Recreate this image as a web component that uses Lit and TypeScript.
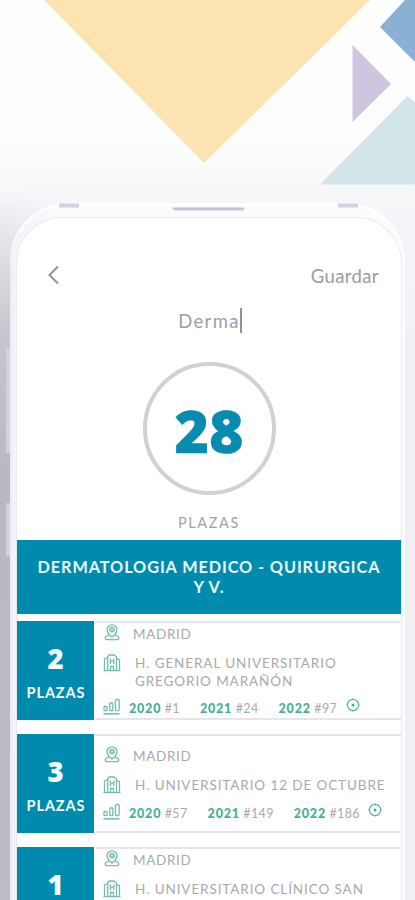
import { LitElement, html, css, svg } from "lit";
import { customElement, property } from "lit/decorators.js";

interface Rank { year: string; pos: string; }
interface Offer { seats: number; city: string; hospital: string[]; ranks: Rank[]; tall?: boolean; }

const offers: Offer[] = [
  { seats: 2, city: "MADRID", hospital: ["H. GENERAL UNIVERSITARIO", "GREGORIO MARAÑÓN"],
    ranks: [{ year: "2020", pos: "#1" }, { year: "2021", pos: "#24" }, { year: "2022", pos: "#97" }] },
  { seats: 3, city: "MADRID", hospital: ["H. UNIVERSITARIO 12 DE OCTUBRE"],
    ranks: [{ year: "2020", pos: "#57" }, { year: "2021", pos: "#149" }, { year: "2022", pos: "#186" }] },
  { seats: 1, city: "MADRID", hospital: ["H. UNIVERSITARIO CLÍNICO SAN"], ranks: [], tall: true },
];

const pinIcon = svg`<svg width="16" height="17" viewBox="0 0 16 17" fill="none" stroke="#6fbfab" stroke-width="1.3">
  <path d="M5.300 10.600C3.800 9.400 3 7.800 3 5.800a5 5 0 0 1 10 0c0 2-.8 3.600-2.300 4.800"/><circle cx="8" cy="5.600" r="2.300"/><path d="M8 4.200v3"/>
  <path d="M5.300 10.500L8 13l2.700-2.500M5 11.300C2.900 11.600 1.200 12.500 1.200 14c0 1.200.6 1.600 1.600 1.600h10.400c1 0 1.600-.4 1.600-1.600 0-1.500-1.700-2.400-3.800-2.700"/></svg>`;
const buildingIcon = svg`<svg width="18" height="18" viewBox="0 0 18 18" fill="none" stroke="#6fbfab" stroke-width="1.300">
  <path d="M.5 16.700h17M4.700 16.500V2.500L6.200 1h5l2.300 2v13.500M4.700 3.500L1.500 5v11.500M13.500 4.500l3 1.300v10.700M7.500 16.500V12.500h3v4M7.400 4.500v5.500M10.800 4.500v5.500M7.400 7.200h3.400"/></svg>`;
const chartIcon = svg`<svg width="18" height="18" viewBox="0 0 18 18" fill="none" stroke="#6fbfab" stroke-width="1.300">
  <rect x="1" y="8.500" width="3" height="4.200" rx=".8"/><rect x="6.800" y="5" width="3" height="7.700" rx=".8"/><rect x="12.400" y="1.500" width="3.800" height="11.200" rx="1.400"/><path d="M.5 15.800h16" stroke-width="1.600"/></svg>`;
const targetIcon = svg`<svg width="14" height="14" viewBox="0 0 14 14" fill="none" stroke="#52b5a0" stroke-width="1.200">
  <circle cx="7" cy="7" r="5.600"/><circle cx="7" cy="7" r="1.500" fill="#45b09a" stroke="none"/><path d="M7 .5v1.500M7 12v1.500M.5 7h1.500M12 7h1.500"/></svg>`;

@customElement("offer-card")
export class OfferCard extends LitElement {
  @property({ attribute: false }) offer!: Offer;
  static styles = css`
    :host { display: flex; height: 99px; flex: none; }
    svg { display: block; flex: none; }
    .seats { width: 77px; margin-right: 1px; background: #008bae; color: #f4fcff; display: flex; flex-direction: column; align-items: center; flex: none; box-sizing: border-box; padding-top: 22px; }
    .count { font: 800 27.500px/32px "Open Sans", sans-serif; }
    .label { font: 700 14.500px/20px Lato, sans-serif; letter-spacing: .9px; margin-top: 8px; margin-right: -1px; }
    .body { flex: 1; border-top: 2px solid #e6e6e9; border-bottom: 2px solid #e6e6e9; box-sizing: border-box; display: flex; flex-direction: column; justify-content: center; color: #a9a9ab; padding-left: 8px; white-space: nowrap; }
    .row { display: flex; font: 400 13.500px/17.500px Lato, sans-serif; letter-spacing: .9px; }
    .city { height: 30px; gap: 13px; padding-left: 1px; letter-spacing: .65px; }
    .hospital { gap: 14px; min-height: 17.500px; }
    .tall { min-height: 35px; }
    .text { margin-top: 1px; margin-bottom: -1px; }
    .city .text { margin-top: 2px; }
    .lines { display: flex; flex-direction: column; }
    .ranks { height: 19px; margin-top: 9px; letter-spacing: .35px; font-size: 12.500px; }
    .chart { width: 26px; }
    .rank { margin-right: 20px; margin-top: 2px; }
    .rank:last-of-type { margin-right: 8.500px; }
    .rank b { font-weight: 900; color: #45ae98; letter-spacing: .8px; }
  `;
  render() {
    const o = this.offer;
    return html`
      <div class="seats"><span class="count">${o.seats}</span><span class="label">PLAZAS</span></div>
      <div class="body">
        <div class="row city"><span class="pin">${pinIcon}</span><span class="text">${o.city}</span></div>
        <div class="row hospital ${o.tall ? "tall" : ""}">${buildingIcon}<div class="lines text">${o.hospital.map((l) => html`<span>${l}</span>`)}</div></div>
        <div class="row ranks"><div class="chart">${chartIcon}</div>
          ${o.ranks.map((r) => html`<span class="rank"><b>${r.year}</b> ${r.pos}</span>`)}
          ${o.ranks.length ? html`<div class="target">${targetIcon}</div>` : ""}
        </div>
      </div>`;
  }
}

@customElement("app-root")
export class AppRoot extends LitElement {
  static styles = css`
    :host { display: block; position: relative; width: 415px; height: 900px; overflow: hidden; background: #fff; font-family: Lato, sans-serif; }
    .backdrop { position: absolute; left: 0; top: 0; display: block; }
    .phone { position: relative; box-sizing: border-box; margin: 203px 0 0 10px; width: 395px; height: 760px; padding: 14px 3px 0 6px; border-radius: 58px 58px 0 0; background: linear-gradient(90deg, #e3e2ec 0, #f3f3f9 3px, #fbfbfe 50px, #fbfbfe 100%); box-shadow: inset 0 3px 3px #fff; }
    .screen { box-sizing: border-box; height: 100%; background: #fff; border-radius: 46px 46px 0 0; border: 1px solid #e9e9ef; border-bottom: 0; display: flex; flex-direction: column; overflow: hidden; }
    .nav { display: flex; justify-content: space-between; padding: 46px 22px 0 30px; height: 28px; flex: none; color: #9b9b9d; font-size: 18.500px; line-height: 25px; letter-spacing: .4px; }
    .chevron { display: block; margin-top: 1px; }
    .search { display: flex; justify-content: center; align-items: center; height: 26px; margin-top: 15px; padding-left: 2px; font-size: 18.500px; line-height: 28px; letter-spacing: 1.300px; color: #9d9d9f; }
    .search span { padding-top: 2px; }
    .caret { width: 2px; height: 25px; background: #929294; }
    .ring { box-sizing: border-box; width: 133px; height: 133px; border: 4px solid #d1d1d3; border-radius: 50%; margin: 29px auto 0; display: flex; align-items: center; justify-content: center; flex: none; font: 800 59px/60px "Open Sans", sans-serif; color: #078bae; padding-top: 2px; -webkit-text-stroke: .4px #078bae; }
    .caption { text-align: center; font-size: 14.500px; line-height: 20px; letter-spacing: 1.600px; color: #a3a3a5; margin-top: 18px; }
    .banner { height: 74px; flex: none; box-sizing: border-box; background: #008bae; color: #e9f9fd; font-size: 16.300px; font-weight: 700; line-height: 20px; letter-spacing: .9px; padding-top: 17px; text-align: center; margin-top: 7px; margin-bottom: 7px; white-space: nowrap; }
    .list { display: flex; flex-direction: column; gap: 14px; }
  `;
  render() {
    return html`
      <svg class="backdrop" width="415" height="900" viewBox="0 0 415 900">
        <defs>
          <linearGradient id="base" x1="0" y1="0" x2="0" y2="1"><stop offset="0" stop-color="#fefefe"/><stop offset=".16" stop-color="#fdfdfe"/><stop offset=".24" stop-color="#f5f5f9"/><stop offset=".4" stop-color="#efeff5"/><stop offset="1" stop-color="#efeff4"/></linearGradient>
          <linearGradient id="fade" x1="0" y1="0" x2="0" y2="1"><stop offset="0" stop-color="#b9b8c1" stop-opacity="0"/><stop offset=".2" stop-color="#b9b8c1" stop-opacity=".75"/><stop offset=".4" stop-color="#b9b8c1"/><stop offset="1" stop-color="#bdbcc4"/></linearGradient>
          <linearGradient id="edge" x1="0" y1="0" x2="1" y2="0"><stop offset="0" stop-color="#fff"/><stop offset=".15" stop-color="#fff"/><stop offset="1" stop-color="#000"/></linearGradient>
          <mask id="side"><path fill="url(#edge)" d="M0 180h60v720H0z"/></mask>
        </defs>
        <path fill="url(#base)" d="M0 0h415v900H0z"/>
        <path fill="url(#fade)" mask="url(#side)" d="M0 190h60v710H0z"/>
        <path fill="#fbe4b2" d="M44 0h326L204 163z"/>
        <path fill="#8ab1d4" d="M405 0h10v62L380 27z"/>
        <path fill="#cfc5de" d="M352.500 45v77L391 84z"/>
        <path fill="#d2e6ea" d="M320 184.500L407.500 96l7.500 6v82.500z"/>
        <path fill="#d3d2dc" d="M6 347h5v106H6zM6 503h5v53H6z"/>
      </svg>
      <div class="phone">
        <div class="screen">
          <div class="nav">
            <svg class="chevron" width="13" height="20" viewBox="0 0 13 20" fill="none" stroke="#929294" stroke-width="2"><path d="M11 1.500L2.500 10l8.500 8.500"/></svg>
            <span>Guardar</span>
          </div>
          <div class="search"><span>Derma</span><div class="caret"></div></div>
          <div class="ring">28</div>
          <div class="caption">PLAZAS</div>
          <div class="banner">DERMATOLOGIA MEDICO - QUIRURGICA<br>Y V.</div>
          <div class="list">${offers.map((o) => html`<offer-card .offer=${o}></offer-card>`)}</div>
        </div>
      </div>
      <svg class="backdrop" width="415" height="215" viewBox="0 0 415 215">
        <path fill="#d3d1dd" d="M59 203.500h20v4H59zM338 203.500h20v4h-20z"/>
        <path fill="#c4c2d5" d="M172 207.500h73q-1 3-4 3h-65q-3 0-4-3z"/>
      </svg>`;
  }
}
